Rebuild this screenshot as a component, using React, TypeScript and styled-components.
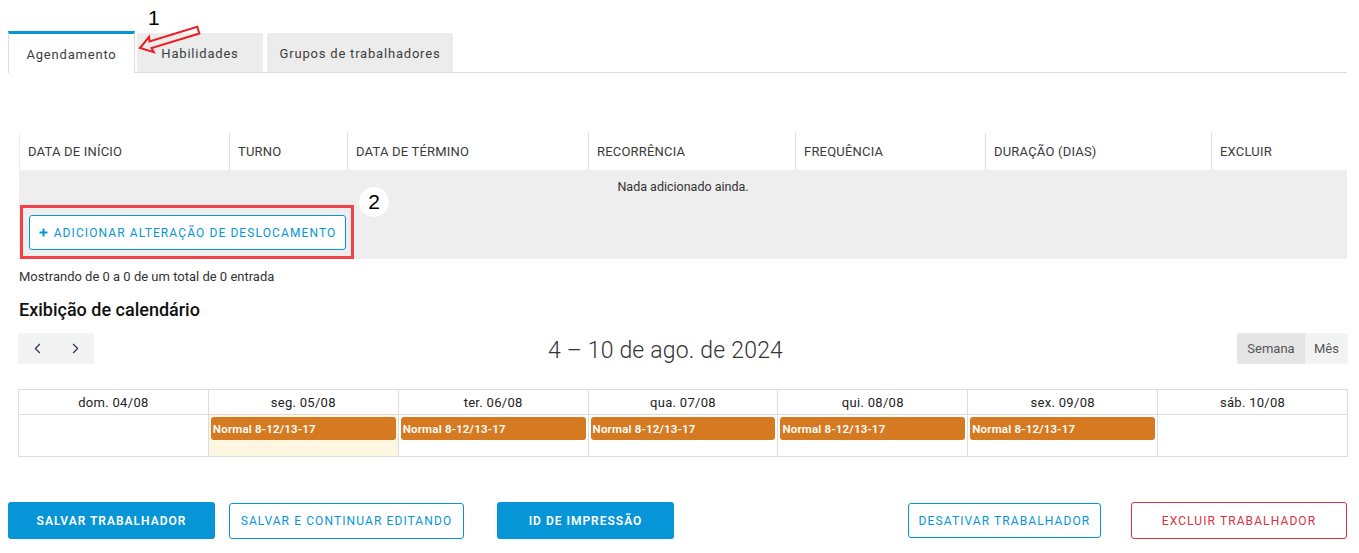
import React from "react";
import styled, { createGlobalStyle } from "styled-components";
import { ChevronLeft, ChevronRight } from "lucide-react";

const Global = createGlobalStyle`
  html, body { margin: 0; padding: 0; background: #fff; }
  body { font-family: Roboto, "Noto Sans", sans-serif; color: #333; width: 1359px; height: 553px; overflow: hidden; }
  * { box-sizing: border-box; }
`;

const Page = styled.div`
  position: relative;
  padding: 32px 12px 0 8px;
`;

const TabBar = styled.div`
  display: flex;
  align-items: flex-end;
  gap: 2px;
  height: 41px;
  border-bottom: 1px solid #dcdcdc;
`;

const Tab = styled.div<{ $active?: boolean; $w: number; $ml?: number }>`
  width: ${(p) => p.$w}px;
  margin-left: ${(p) => p.$ml ?? 0}px;
  height: ${(p) => (p.$active ? 42 : 39)}px;
  margin-bottom: ${(p) => (p.$active ? -1 : 0)}px;
  display: flex;
  align-items: center;
  justify-content: center;
  font-size: 13px;
  letter-spacing: 0.8px;
  color: #3c3c3c;
  background: ${(p) => (p.$active ? "#fff" : "#ececec")};
  border-top: ${(p) => (p.$active ? "3px solid #0696d7" : "none")};
  border-left: ${(p) => (p.$active ? "1px solid #dcdcdc" : "none")};
  border-right: ${(p) => (p.$active ? "1px solid #dcdcdc" : "none")};
  border-radius: ${(p) => (p.$active ? "0" : "2px 2px 0 0")};
  padding-top: ${(p) => (p.$active ? 1 : 2)}px;
`;

const Annot = styled.svg`
  position: absolute;
  left: 130px;
  top: 0;
  overflow: visible;
`;

const Section = styled.div`
  padding: 0 0 0 11px;
`;

const Table = styled.div`
  margin-top: 60px;
  width: 1328px;
`;

const HeadRow = styled.div`
  display: grid;
  grid-template-columns: 210px 118px 241px 207px 190px 226px 136px;
  height: 37px;
  border-left: 1px solid #ececec;
`;

const HeadCell = styled.div`
  display: flex;
  align-items: center;
  padding-left: 8px;
  font-size: 13px;
  letter-spacing: 0.2px;
  color: #3a3a3a;
  border-right: 1px solid #dedede;
  &:last-child { border-right: none; }
`;

const Body = styled.div`
  background: #eeeeee;
  height: 89px;
  display: flex;
  flex-direction: column;
`;

const Empty = styled.div`
  height: 33px;
  display: flex;
  align-items: center;
  justify-content: center;
  font-size: 12.5px;
  color: #333;
`;

const AddWrap = styled.div`
  position: relative;
  margin: 2px 0 0 1px;
  width: 334px;
  height: 54px;
  border: 3px solid #f2434a;
  padding: 7px 0 0 6px;
`;

const OutlineBtn = styled.button<{ $w: number; $h: number; $red?: boolean; $ml?: number }>`
  width: ${(p) => p.$w}px;
  height: ${(p) => p.$h}px;
  margin-left: ${(p) => p.$ml ?? 0}px;
  background: #fff;
  border: 1px solid ${(p) => (p.$red ? "#d7323f" : "#0696d7")};
  border-radius: 3px;
  color: ${(p) => (p.$red ? "#d7323f" : "#0696d7")};
  font-family: Roboto, "Noto Sans", sans-serif;
  font-size: 12px;
  letter-spacing: 1.1px;
  display: flex;
  align-items: center;
  justify-content: center;
  gap: 6px;
  padding: 0;
  cursor: pointer;
`;

const SolidBtn = styled.button<{ $w: number; $ml?: number }>`
  width: ${(p) => p.$w}px;
  height: 37px;
  margin-left: ${(p) => p.$ml ?? 0}px;
  background: #0696d7;
  border: none;
  border-radius: 3px;
  color: #fff;
  font-family: Roboto, "Noto Sans", sans-serif;
  font-size: 12px;
  font-weight: 600;
  letter-spacing: 1px;
  padding: 0;
  cursor: pointer;
`;

const Badge = styled.div`
  position: absolute;
  left: 336px;
  top: -21px;
  width: 30px;
  height: 30px;
  border-radius: 50%;
  background: #fff;
  display: flex;
  align-items: center;
  justify-content: center;
  font-family: "Liberation Sans", Arial, sans-serif;
  font-size: 21px;
  color: #000;
`;

const Info = styled.div`
  margin-top: 10px;
  font-size: 13px;
  color: #333;
  line-height: 16px;
`;

const Heading = styled.h2`
  margin: 14px 0 0;
  font-size: 18px;
  font-weight: 500;
  color: #111;
  line-height: 22px;
`;

const Toolbar = styled.div`
  margin-top: 12px;
  display: flex;
  justify-content: space-between;
  align-items: center;
  width: 1330px;
  margin-left: -1px;
`;

const NavGroup = styled.div`
  display: flex;
  width: 76px;
  height: 31px;
  background: #f3f3f3;
  border-radius: 3px;
`;

const NavBtn = styled.div`
  flex: 1;
  display: flex;
  align-items: center;
  justify-content: center;
  color: #283050;
`;

const Title = styled.div`
  font-size: 23px;
  font-weight: 300;
  color: #333;
  letter-spacing: 0.2px;
  padding-top: 3px;
`;

const ViewGroup = styled.div`
  display: flex;
  height: 31px;
  border-radius: 3px;
  overflow: hidden;
`;

const ViewBtn = styled.div<{ $active?: boolean; $w: number }>`
  width: ${(p) => p.$w}px;
  display: flex;
  align-items: center;
  justify-content: center;
  font-size: 13px;
  color: #555;
  background: ${(p) => (p.$active ? "#e5e5e5" : "#f3f3f3")};
`;

const Calendar = styled.div`
  margin-top: 25px;
  margin-left: -1px;
  width: 1330px;
  display: grid;
  grid-template-columns: repeat(7, 1fr);
  border-top: 1px solid #dcdcdc;
  border-left: 1px solid #dcdcdc;
`;

const DayHead = styled.div`
  height: 25px;
  display: flex;
  align-items: center;
  justify-content: center;
  font-size: 13px;
  letter-spacing: 0.3px;
  color: #222;
  border-right: 1px solid #dcdcdc;
  border-bottom: 1px solid #dcdcdc;
`;

const DayCell = styled.div<{ $today?: boolean }>`
  height: 42px;
  padding: 2px 2px 0 2px;
  background: ${(p) => (p.$today ? "#fdf7e1" : "#fff")};
  border-right: 1px solid #dcdcdc;
  border-bottom: 1px solid #dcdcdc;
`;

const Event = styled.div`
  height: 23px;
  background: #d67a22;
  border-radius: 3px;
  color: #fff;
  font-size: 11.5px;
  font-weight: 600;
  letter-spacing: 0.2px;
  display: flex;
  align-items: center;
  padding-left: 2px;
`;

const Footer = styled.div`
  margin-top: 45px;
  display: flex;
  align-items: center;
  justify-content: space-between;
  width: 1339px;
`;

const Group = styled.div`
  display: flex;
  align-items: center;
`;

const days = [
  { label: "dom. 04/08", ev: false },
  { label: "seg. 05/08", ev: true, today: true },
  { label: "ter. 06/08", ev: true },
  { label: "qua. 07/08", ev: true },
  { label: "qui. 08/08", ev: true },
  { label: "sex. 09/08", ev: true },
  { label: "sáb. 10/08", ev: false },
];

const heads = ["DATA DE INÍCIO", "TURNO", "DATA DE TÉRMINO", "RECORRÊNCIA", "FREQUÊNCIA", "DURAÇÃO (DIAS)", "EXCLUIR"];

export default function App() {
  return (
    <>
      <Global />
      <Page>
        <Annot width="80" height="60" viewBox="0 0 80 60">
          <text x="18" y="25" fontFamily="Liberation Sans, Arial, sans-serif" fontSize="21" fill="#000">1</text>
          <polygon
            points="0,0 12,-8 11,-3.5 61,-3.5 61,3.5 11,3.5 12,8"
            transform="translate(10 48) rotate(-17)"
            fill="none"
            stroke="#ee1c24"
            strokeWidth="2"
            strokeLinejoin="miter"
          />
        </Annot>
        <TabBar>
          <Tab $active $w={127}>Agendamento</Tab>
          <Tab $w={126}>Habilidades</Tab>
          <Tab $w={186} $ml={2}>Grupos de trabalhadores</Tab>
        </TabBar>
        <Section>
          <Table>
            <HeadRow>
              {heads.map((h) => (
                <HeadCell key={h}>{h}</HeadCell>
              ))}
            </HeadRow>
            <Body>
              <Empty>Nada adicionado ainda.</Empty>
              <AddWrap>
                <OutlineBtn $w={317} $h={35}>
                  <svg width="9" height="9" viewBox="0 0 9 9">
                    <path d="M4.5 0.5v8M0.5 4.5h8" stroke="#0696d7" strokeWidth="2" />
                  </svg>
                  ADICIONAR ALTERAÇÃO DE DESLOCAMENTO
                </OutlineBtn>
                <Badge>2</Badge>
              </AddWrap>
            </Body>
          </Table>
          <Info>Mostrando de 0 a 0 de um total de 0 entrada</Info>
          <Heading>Exibição de calendário</Heading>
          <Toolbar>
            <NavGroup>
              <NavBtn>
                <ChevronLeft size={17} strokeWidth={1.6} />
              </NavBtn>
              <NavBtn>
                <ChevronRight size={17} strokeWidth={1.6} />
              </NavBtn>
            </NavGroup>
            <Title>4 – 10 de ago. de 2024</Title>
            <ViewGroup>
              <ViewBtn $active $w={68}>Semana</ViewBtn>
              <ViewBtn $w={43}>Mês</ViewBtn>
            </ViewGroup>
          </Toolbar>
          <Calendar>
            {days.map((d) => (
              <DayHead key={d.label}>{d.label}</DayHead>
            ))}
            {days.map((d) => (
              <DayCell key={d.label + "c"} $today={d.today}>
                {d.ev && <Event>Normal 8-12/13-17</Event>}
              </DayCell>
            ))}
          </Calendar>
        </Section>
        <Footer>
          <Group>
            <SolidBtn $w={207}>SALVAR TRABALHADOR</SolidBtn>
            <OutlineBtn $w={235} $h={36} $ml={14}>SALVAR E CONTINUAR EDITANDO</OutlineBtn>
            <SolidBtn $w={177} $ml={33}>ID DE IMPRESSÃO</SolidBtn>
          </Group>
          <Group>
            <OutlineBtn $w={193} $h={35}>DESATIVAR TRABALHADOR</OutlineBtn>
            <OutlineBtn $w={216} $h={37} $red $ml={30}>EXCLUIR TRABALHADOR</OutlineBtn>
          </Group>
        </Footer>
      </Page>
    </>
  );
}
